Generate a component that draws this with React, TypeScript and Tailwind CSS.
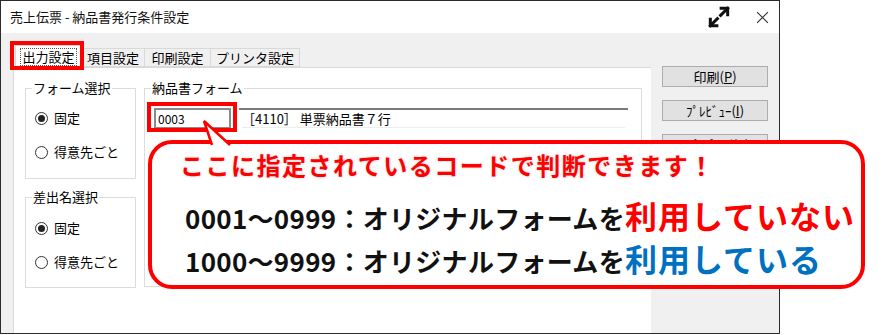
import React from "react";

const ui = { fontFamily: '"Noto Sans CJK JP", "Noto Sans", sans-serif' };

function Radio({ checked, label }: { checked?: boolean; label: string }) {
  return (
    <div className="flex items-center gap-[6px] pl-[9px] text-[13px] leading-[16px] text-black">
      <span className="flex h-[13px] w-[13px] items-center justify-center rounded-full border border-[#333] bg-white">
        {checked && <span className="h-[7px] w-[7px] rounded-full bg-[#222]" />}
      </span>
      <span>{label}</span>
    </div>
  );
}

function Group({ title, className, children }: { title: string; className?: string; children?: React.ReactNode }) {
  return (
    <div className={`relative border border-[#dcdcdc] ${className ?? ""}`}>
      <span className="absolute -top-[10px] left-[6px] bg-white px-[1px] text-[13px] leading-[18px] text-black">{title}</span>
      {children}
    </div>
  );
}

function Btn({ label, hot }: { label: string; hot: string }) {
  return (
    <div className="flex h-[21px] w-[106px] items-center justify-center border border-[#adadad] bg-[#e1e1e1] text-[13px] leading-[16px] text-black">
      {label}(<span className="underline">{hot}</span>)
    </div>
  );
}

function ExpandIcon() {
  return (
    <svg width="26" height="26" viewBox="0 0 24 24" fill="none" stroke="#111" strokeWidth="2.8" strokeLinecap="square">
      <path d="M13.5 10.5 L20 4" />
      <path d="M14 4 H20 V10" strokeLinejoin="miter" />
      <path d="M10.5 13.5 L4 20" />
      <path d="M4 14 V20 H10" strokeLinejoin="miter" />
    </svg>
  );
}

export default function App() {
  return (
    <div className="relative h-[335px] w-[883px] overflow-hidden bg-white" style={ui}>
      {/* dialog window */}
      <div className="flex h-[334px] w-[780px] flex-col border border-[#2b2b2b]">
        <div className="flex h-[32px] items-center bg-white pl-[9px] pr-[10px]">
          <span className="text-[13px] leading-[18px] text-[#111]">売上伝票 - 納品書発行条件設定</span>
          <div className="ml-auto flex items-center gap-[24px]">
            <ExpandIcon />
            <svg width="13" height="13" viewBox="0 0 12 12" stroke="#333" strokeWidth="1.1">
              <path d="M1 1 L11 11 M11 1 L1 11" />
            </svg>
          </div>
        </div>

        <div className="flex flex-1 bg-[#f0f0f0]">
          <div className="flex w-[650px] flex-col">
            {/* tabs */}
            <div className="flex h-[34px] items-end pl-[14px] text-[13px] leading-[16px] text-black">
              <div className="flex h-[22px] w-[67px] items-center justify-center border border-b-0 border-[#d9d9d9] bg-white">
                <span className="border border-dotted border-[#555] px-[1px]">出力設定</span>
              </div>
              <div className="flex h-[19px] w-[63px] items-center justify-center border border-l-0 border-[#d9d9d9] bg-[#f0f0f0]">
                項目設定
              </div>
              <div className="flex h-[19px] w-[66px] items-center justify-center border border-l-0 border-[#d9d9d9] bg-[#f0f0f0]">
                印刷設定
              </div>
              <div className="flex h-[19px] w-[89px] items-center justify-center border border-l-0 border-[#d9d9d9] bg-[#f0f0f0]">
                プリンタ設定
              </div>
            </div>

            {/* tab page */}
            <div className="ml-[12px] flex flex-1 gap-[8px] border-l border-t border-[#d9d9d9] bg-white pl-[11px] pr-[9px] pt-[20px]">
              <div className="flex w-[111px] flex-col gap-[18px]">
                <Group title="フォーム選択" className="h-[91px] pt-[21px]">
                  <div className="flex flex-col gap-[18px]">
                    <Radio checked label="固定" />
                    <Radio label="得意先ごと" />
                  </div>
                </Group>
                <Group title="差出名選択" className="h-[91px] pt-[22px]">
                  <div className="flex flex-col gap-[18px]">
                    <Radio checked label="固定" />
                    <Radio label="得意先ごと" />
                  </div>
                </Group>
              </div>
              <Group title="納品書フォーム" className="h-[199px] flex-1 pl-[9px] pt-[19px]">
                <div className="flex gap-[8px]">
                  <div className="flex h-[21px] w-[77px] items-center border-2 border-[#8a8a8a] bg-white px-[2px] text-[12px] leading-[14px] text-black">
                    0003
                  </div>
                  <div className="flex h-[21px] w-[389px] items-center border-t-2 border-[#7a7a7a] bg-white px-[3px] text-[13px] leading-[16px] text-black">
                    <span className="w-full border-b border-[#eee]">［4110］ 単票納品書７行</span>
                  </div>
                </div>
              </Group>
            </div>
          </div>

          {/* buttons */}
          <div className="flex flex-col gap-[13px] pl-[11px] pt-[33px]">
            <Btn label="印刷" hot="P" />
            <Btn label="ﾌﾟﾚﾋﾞｭｰ" hot="I" />
            <Btn label="ｺﾋﾟｰ印刷" hot="T" />
          </div>
        </div>
      </div>

      {/* annotations */}
      <div className="absolute left-[10px] top-[41px] h-[29px] w-[74px] border-[4px] border-[#ff0000]" />
      <div className="absolute left-[147px] top-[102px] h-[30px] w-[90px] border-[4px] border-[#ff0000]" />

      <div className="absolute left-[148px] top-[140px] h-[149px] w-[717px] rounded-[24px] border-[4px] border-[#ff0000] bg-white">
        <div className="pl-[28px] pt-[6px] text-[24px] font-bold leading-[30px] tracking-[1.5px] text-[#ff0000] [text-shadow:0_0_3px_rgba(0,0,0,0.2)]">
          ここに指定されているコードで判断できます！
        </div>
        <div className="mt-[17px] pl-[33px] font-bold leading-[36px] text-[#111]">
          <span className="text-[26px] tracking-[0.3px]">0001～0999：オリジナルフォームを</span>
          <span className="text-[32px] tracking-[1px] text-[#ff0000]">利用していない</span>
        </div>
        <div className="pl-[33px] font-bold leading-[36px] text-[#111]">
          <span className="text-[26px] tracking-[0.3px]">1000～9999：オリジナルフォームを</span>
          <span className="text-[32px] tracking-[1px] text-[#0070c0]">利用している</span>
        </div>
      </div>

      <svg className="absolute left-[190px] top-[115px]" width="50" height="32" viewBox="0 0 50 32">
        <polygon points="22,30 14,6 40,30" fill="#fff" />
        <path d="M22 30 L14 6 L40 30" fill="none" stroke="#ff0000" strokeWidth="2.5" strokeLinejoin="miter" />
      </svg>
    </div>
  );
}
